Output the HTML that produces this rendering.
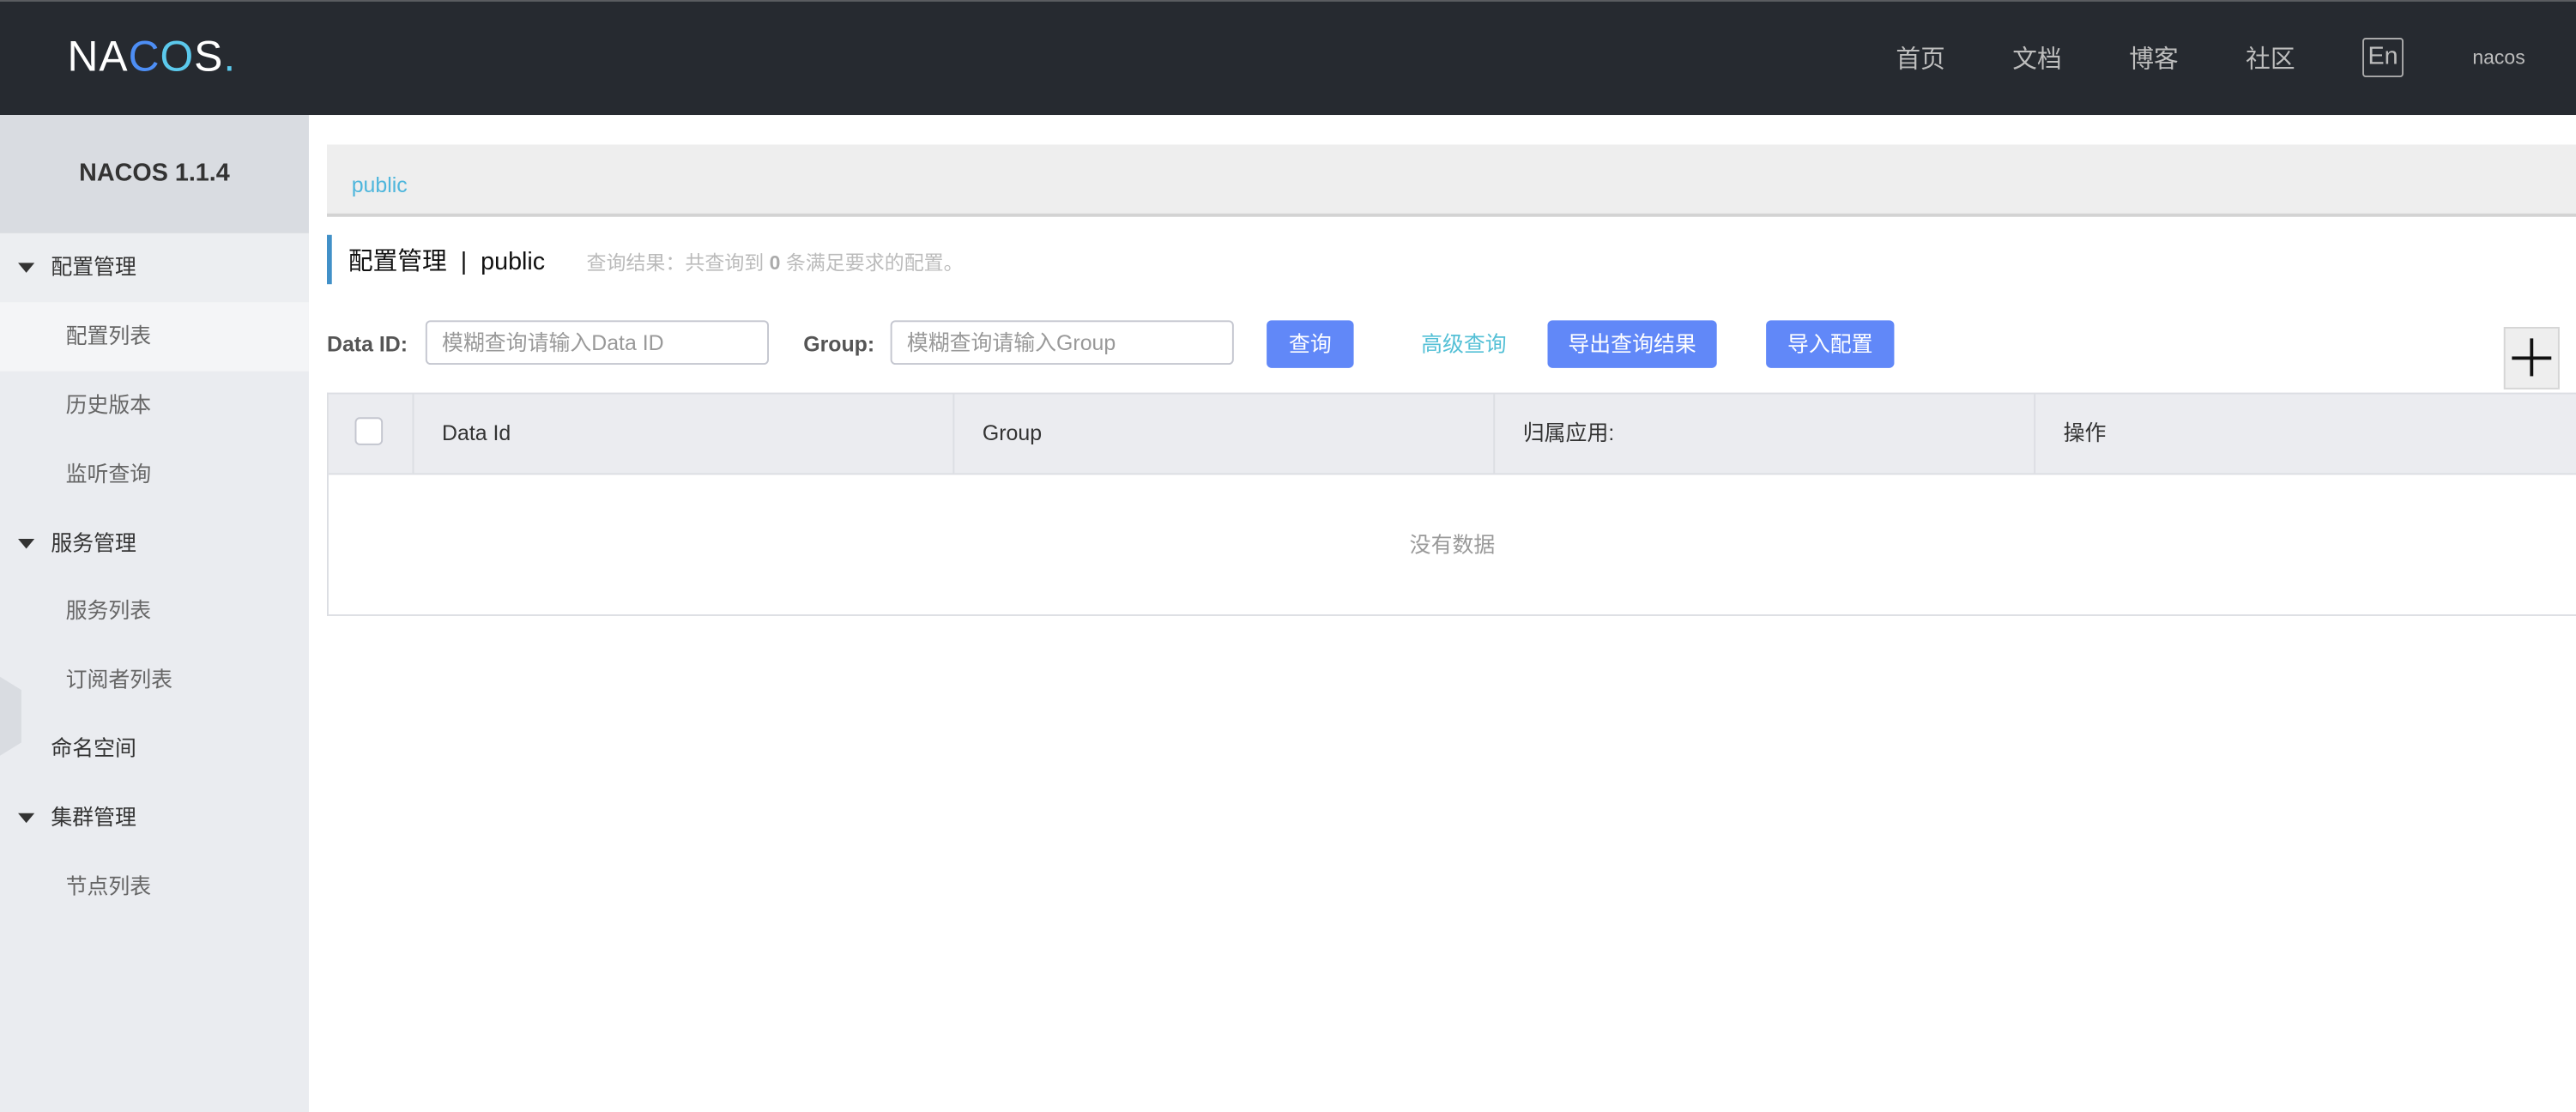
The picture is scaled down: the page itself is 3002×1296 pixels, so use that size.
<!DOCTYPE html>
<html><head><meta charset="utf-8"><style>
html,body{margin:0;padding:0;width:3002px;height:1296px;overflow:hidden;background:#fff}
#w{position:absolute;left:0;top:0;width:1568px;height:677px;transform:scale(1.91454);transform-origin:0 0;font-family:"Liberation Sans","Noto Sans CJK SC",sans-serif;line-height:1.2}
.a{position:absolute;white-space:nowrap}
.hdr{left:0;top:0;width:1568px;height:70px;background:#262a30;border-top:1px solid #5a5c60;box-sizing:border-box}
.nav{color:#bdbdbd;font-size:15px;top:28px}
.sb{left:0;top:70px;width:188px;height:607px;background:#eaecf0}
.it{font-size:13px;left:0;width:188px;height:42px;line-height:42px}
.top{color:#333;padding-left:31px;box-sizing:border-box}
.sub{color:#666;padding-left:40px;box-sizing:border-box}
.tri{position:absolute;left:11px;top:18px;width:0;height:0;border-left:5px solid transparent;border-right:5px solid transparent;border-top:6px solid #333}
.inp{height:27px;border:1px solid #c4c6cf;border-radius:3px;box-sizing:border-box;font-size:13px;color:#999;line-height:25px;padding-left:9px}
.btn{background:#6188f8;color:#fff;border-radius:3px;font-size:13px;height:29px;line-height:29px;text-align:center}
.th{font-size:13px;color:#333;top:240px;height:48px;line-height:48px}
.vl{top:240px;width:1px;height:48px;background:#dcdee3}
</style></head><body><div id="w">
<div class="a hdr"></div>
<div class="a" style="left:41px;top:19px;font-size:26px;font-weight:normal;color:#fff;letter-spacing:0.5px">NA<span style="color:#4d8ef5">C</span><span style="color:#5bc9ec">O</span>S<span style="color:#5bc9ec">.</span></div>
<div class="a nav" style="left:1154px">首页</div>
<div class="a nav" style="left:1225px">文档</div>
<div class="a nav" style="left:1296px">博客</div>
<div class="a nav" style="left:1367px">社区</div>
<div class="a" style="left:1438px;top:23px;width:25px;height:24px;border:1px solid #aaa;border-radius:2px;box-sizing:border-box;color:#bdbdbd;font-size:15px;text-align:center;line-height:22px">En</div>
<div class="a" style="left:1505px;top:28px;color:#bdbdbd;font-size:12px">nacos</div>

<div class="a sb"></div>
<div class="a" style="left:0;top:70px;width:188px;height:72px;background:#d9dce1;text-align:center;line-height:72px;font-weight:bold;font-size:15px;color:#333">NACOS 1.1.4</div>
<div class="a it top" style="top:142px;background:#eceef1"><span class="tri"></span>配置管理</div>
<div class="a it sub" style="top:184px;background:#f4f5f7">配置列表</div>
<div class="a it sub" style="top:226px">历史版本</div>
<div class="a it sub" style="top:268px">监听查询</div>
<div class="a it top" style="top:310px"><span class="tri"></span>服务管理</div>
<div class="a it sub" style="top:351px">服务列表</div>
<div class="a it sub" style="top:393px">订阅者列表</div>
<div class="a it top" style="top:435px">命名空间</div>
<div class="a it top" style="top:477px"><span class="tri"></span>集群管理</div>
<div class="a it sub" style="top:519px">节点列表</div>
<svg class="a" style="left:0;top:408px" width="16" height="56"><polygon points="0,4 13,12 13,44 0,52" fill="#d9dce1"/></svg>

<div class="a" style="left:199px;top:88px;width:1369px;height:42px;background:#eee;border-bottom:2px solid #d3d3d3"></div>
<div class="a" style="left:214px;top:105px;font-size:13px;color:#4eb6dc">public</div>
<div class="a" style="left:199px;top:143px;width:3px;height:30px;background:#4190c8"></div>
<div class="a" style="left:212px;top:151px;font-size:15px;color:#111">配置管理 &nbsp;|&nbsp; public</div>
<div class="a" style="left:357px;top:153px;font-size:12px;color:#bbb">查询结果：共查询到 <b style="color:#aaa">0</b> 条满足要求的配置。</div>

<div class="a" style="left:199px;top:195px;height:29px;line-height:29px;font-size:13px;font-weight:bold;color:#555">Data ID:</div>
<div class="a inp" style="left:259px;top:195px;width:209px">模糊查询请输入Data ID</div>
<div class="a" style="left:489px;top:195px;height:29px;line-height:29px;font-size:13px;font-weight:bold;color:#555">Group:</div>
<div class="a inp" style="left:542px;top:195px;width:209px">模糊查询请输入Group</div>
<div class="a btn" style="left:771px;top:195px;width:53px">查询</div>
<div class="a" style="left:865px;top:195px;height:29px;line-height:29px;font-size:13px;color:#54c0d6">高级查询</div>
<div class="a btn" style="left:942px;top:195px;width:103px">导出查询结果</div>
<div class="a btn" style="left:1075px;top:195px;width:78px">导入配置</div>
<div class="a" style="left:1524px;top:199px;width:34px;height:38px;background:#eee;border:1px solid #d6d6d6;box-sizing:border-box"></div>
<div class="a" style="left:1540px;top:206px;width:2px;height:23px;background:#111"></div>
<div class="a" style="left:1529px;top:217px;width:24px;height:2px;background:#111"></div>

<div class="a" style="left:199px;top:239px;width:1369px;height:136px;border:1px solid #dcdee3;border-right:none;box-sizing:border-box"></div>
<div class="a" style="left:200px;top:240px;width:1368px;height:48px;background:#ebecf0;border-bottom:1px solid #dcdee3"></div>
<div class="a vl" style="left:251px"></div>
<div class="a vl" style="left:580px"></div>
<div class="a vl" style="left:909px"></div>
<div class="a vl" style="left:1238px"></div>
<div class="a" style="left:216px;top:254px;width:17px;height:17px;border:1px solid #c4c6cf;border-radius:3px;background:#fff;box-sizing:border-box"></div>
<div class="a th" style="left:269px">Data Id</div>
<div class="a th" style="left:598px">Group</div>
<div class="a th" style="left:927px">归属应用:</div>
<div class="a th" style="left:1256px">操作</div>
<div class="a" style="left:858px;top:324px;font-size:13px;color:#999">没有数据</div>
</div></body></html>
